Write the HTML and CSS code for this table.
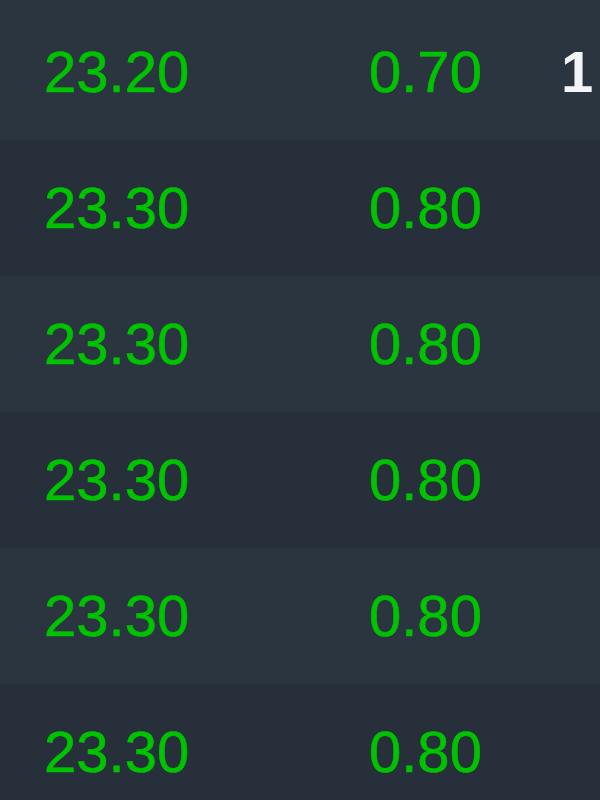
FILE: index.html
```html
<!DOCTYPE html>
<html lang="en">
<head>
    <meta charset="UTF-8">
    <meta name="viewport" content="width=device-width, initial-scale=1.0">
    <title>Quotes</title>
    <link rel="stylesheet" href="styles.css">
</head>
<body>
    <div class="quotes">
        <div class="row">
            <span class="cell price up">23.20</span>
            <span class="cell change up">0.70</span>
            <span class="cell volume">1</span>
        </div>
        <div class="row">
            <span class="cell price up">23.30</span>
            <span class="cell change up">0.80</span>
            <span class="cell volume"></span>
        </div>
        <div class="row">
            <span class="cell price up">23.30</span>
            <span class="cell change up">0.80</span>
            <span class="cell volume"></span>
        </div>
        <div class="row">
            <span class="cell price up">23.30</span>
            <span class="cell change up">0.80</span>
            <span class="cell volume"></span>
        </div>
        <div class="row">
            <span class="cell price up">23.30</span>
            <span class="cell change up">0.80</span>
            <span class="cell volume"></span>
        </div>
        <div class="row">
            <span class="cell price up">23.30</span>
            <span class="cell change up">0.80</span>
            <span class="cell volume"></span>
        </div>
    </div>
</body>
</html>
```

FILE: styles.css
```css
html, body {
    margin: 0;
    padding: 0;
    background-color: #2b3540;
    overflow: hidden;
}
body {
    font-family: "Liberation Sans", Arial, sans-serif;
    font-size: 58px;
    line-height: 1;
}
.quotes {
    padding-top: 4px;
}
.row {
    display: grid;
    grid-template-columns: 325px 192px 1fr;
    align-items: center;
    height: 136px;
    padding-left: 44px;
    white-space: nowrap;
}
.row:nth-child(odd) {
    background-color: #2b3540;
}
.row:nth-child(even) {
    background-color: #262f3a;
}
.up {
    color: #00c300;
    -webkit-text-stroke: 0.6px #00c300;
}
.volume {
    color: #f2f4f5;
    font-weight: bold;
}
```
